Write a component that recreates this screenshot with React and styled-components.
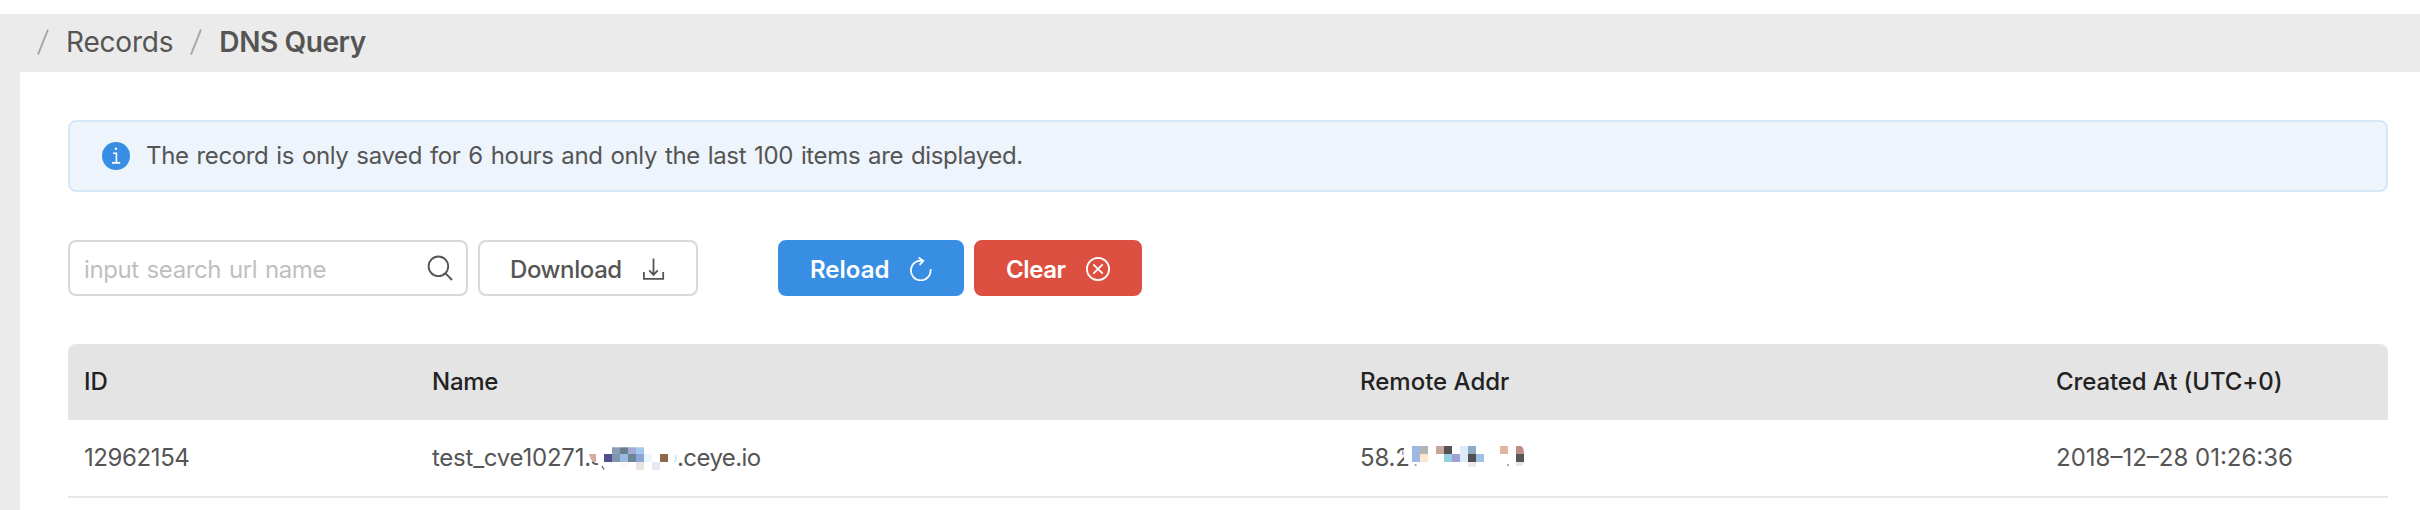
import React from "react";
import styled, { createGlobalStyle } from "styled-components";

const GlobalStyle = createGlobalStyle`
  * { box-sizing: border-box; }
  body {
    margin: 0;
    background: #fff;
    font-family: "Inter", "Liberation Sans", sans-serif;
    font-size: 24px;
    color: #555;
  }
`;

const Page = styled.div`
  height: 510px;
  padding-top: 14px;
  overflow: hidden;
`;

const Shell = styled.div`
  height: 496px;
  background: #ebebeb;
`;

const Breadcrumb = styled.nav`
  display: flex;
  align-items: center;
  height: 58px;
  padding: 0 0 2px 37px;
  font-size: 28px;
  line-height: 36px;
`;

const Slash = styled.svg`
  width: 12px;
  height: 26px;
  margin-top: -1px;
  fill: none;
  stroke: #a6a6a6;
  stroke-width: 2;
`;

const Crumb = styled.span`
  margin: 0 17px 0 17px;
  letter-spacing: ${(p) => (p.$current ? "-0.4px" : "-0.2px")};
  font-weight: ${(p) => (p.$current ? 600 : 400)};
`;

const Content = styled.main`
  height: 438px;
  margin-left: 20px;
  padding: 48px 32px 0 48px;
  background: #fff;
`;

const Alert = styled.div`
  display: flex;
  align-items: center;
  height: 72px;
  padding: 0 32px 2px;
  border: 2px solid #d5e7f7;
  border-radius: 8px;
  background: #edf4fb;
  letter-spacing: -0.36px;
  word-spacing: 1.5px;
`;

const InfoIcon = styled.svg`
  width: 28px;
  height: 28px;
  margin: 2px 16px 0 0;
`;

const Toolbar = styled.div`
  display: flex;
  margin-top: 48px;
`;

const SearchBox = styled.div`
  display: flex;
  align-items: center;
  width: 400px;
  height: 56px;
  margin-right: 10px;
  padding: 0 13px 0 14px;
  border: 2px solid #d9d9d9;
  border-radius: 8px;
`;

const SearchInput = styled.input`
  flex: 1;
  min-width: 0;
  height: 50px;
  padding: 2px 0 0;
  border: 0;
  outline: 0;
  background: none;
  font: inherit;
  letter-spacing: -0.4px;
  word-spacing: 1.5px;
  &::placeholder { color: #bfbfbf; opacity: 1; }
`;

const Icon = styled.svg`
  flex: none;
  width: ${(p) => p.$size}px;
  height: ${(p) => p.$size}px;
  fill: none;
  stroke: currentColor;
  stroke-width: ${(p) => p.$stroke || 1.8};
`;

const variants = {
  plain: { bg: "#fff", fg: "#555", border: "#d9d9d9", weight: 500 },
  primary: { bg: "#388ee2", fg: "#fff", border: "#388ee2", weight: 600 },
  danger: { bg: "#dd4f40", fg: "#fff", border: "#dd4f40", weight: 600 },
};

const Button = styled.button`
  display: flex;
  align-items: center;
  justify-content: space-between;
  width: ${(p) => p.$width}px;
  height: 56px;
  margin: 0 10px 0 ${(p) => p.$offset || 0}px;
  padding: 2px 30px 0;
  border: 2px solid ${(p) => variants[p.$variant].border};
  border-radius: 8px;
  background: ${(p) => variants[p.$variant].bg};
  color: ${(p) => variants[p.$variant].fg};
  font: inherit;
  font-weight: ${(p) => variants[p.$variant].weight};
  letter-spacing: ${(p) => p.$tracking || 0}px;
`;

const Table = styled.div`
  margin-top: 48px;
`;

const TableRow = styled.div`
  display: grid;
  grid-template-columns: 15% 40% 30% 15%;
  align-items: center;
  height: 78px;
  padding-bottom: 2px;
  border-bottom: 2px solid #e8e8e8;
`;

const HeadRow = styled(TableRow)`
  height: 76px;
  border-bottom: 0;
  border-radius: 8px 8px 0 0;
  background: #e4e4e4;
  color: #222;
  font-weight: 500;
`;

const Cell = styled.div`
  display: flex;
  align-items: center;
  padding: 0 16px;
  white-space: nowrap;
  letter-spacing: ${(p) => p.$tracking || 0}px;
`;

const Suffix = styled.span`
  letter-spacing: -0.6px;
`;

const Mosaic = styled.svg`
  flex: none;
  width: ${(p) => p.$width}px;
  height: 22px;
  margin-left: ${(p) => p.$left}px;
  overflow: visible;
`;

const nameTiles = [
  [2, 1, "#544d90"], [3, 0, "#8b9cb4"], [3, 1, "#7f96ae"],
  [4, 0, "#687f8d"], [4, 1, "#98b9e0"], [5, 0, "#a2a9d9"], [5, 1, "#6b8596"],
  [6, 0, "#a0c9ea"], [6, 1, "#8ba5d8"], [6, 2, "#e9e2e2"], [7, 1, "#eaf7fc"],
  [8, 2, "#e7e7f2"], [9, 1, "#8b6b48"], [4, 2, "#fff8f8"],
];

const addrTiles = [
  [0, 0, "#9bb9e2"], [0, 1, "#9bb9e2"], [1, 0, "#b5b5b6"], [1, 1, "#fde8cf"],
  [3, 0, "#c8a59b"], [4, 0, "#535353"], [4, 1, "#94cfdf"], [5, 1, "#a2a0d8"],
  [6, 0, "#dcebfa"], [6, 1, "#dcebfa"], [7, 0, "#8aacc4"], [7, 1, "#505052"],
  [8, 1, "#a1c1e7"], [11, 0, "#dfb89f"], [13, 1, "#565656"],
];

const Tiles = ({ data, inset = 0 }) =>
  data.map(([x, y, fill]) => (
    <rect
      key={`${x}-${y}`}
      x={x * 8}
      y={y ? y * 8 : inset}
      width="8"
      height={y ? 8 : 8 - inset}
      fill={fill}
    />
  ));

const SlashMark = () => (
  <Slash viewBox="0 0 12 26"><path d="M11 0.5 L1 25.5" /></Slash>
);

export default function App() {
  return (
    <Page>
      <GlobalStyle />
      <Shell>
        <Breadcrumb>
          <SlashMark />
          <Crumb>Records</Crumb>
          <SlashMark />
          <Crumb $current>DNS Query</Crumb>
        </Breadcrumb>
        <Content>
          <Alert>
            <InfoIcon viewBox="0 0 28 28">
              <circle cx="14" cy="14" r="14" fill="#388ee2" />
              <path d="M11 11.2h3.4v9.5M10 20.9h8.2" fill="none" stroke="#fff" strokeWidth="1.6" />
              <circle cx="13.9" cy="6.8" r="1.2" fill="#fff" />
            </InfoIcon>
            <span>The record is only saved for 6 hours and only the last 100 items are displayed.</span>
          </Alert>
          <Toolbar>
            <SearchBox>
              <SearchInput placeholder="input search url name" />
              <Icon $size={26} $stroke={1.9} viewBox="0 0 26 26">
                <circle cx="11.4" cy="11.3" r="9.8" />
                <path d="M18.3 18.2 L25 25" />
              </Icon>
            </SearchBox>
            <Button $variant="plain" $width={220} $tracking={-0.4}>
              Download
              <Icon $size={24} viewBox="0 0 24 24">
                <path d="M1.9 15v6.8h19.3V15M11.5 1.6v16.2M7.2 13.4l4.3 4.5 4.3-4.5" />
              </Icon>
            </Button>
            <Button $variant="primary" $width={186} $offset={70}>
              Reload
              <Icon $size={24} viewBox="0 0 24 24">
                <path d="M22.6 12.2 A9.9 9.9 0 1 1 14.5 3.7M10.6 0.6l4.6 3.3-3.6 3.9" />
              </Icon>
            </Button>
            <Button $variant="danger" $width={168} $tracking={-0.4}>
              Clear
              <Icon $size={24} viewBox="0 0 24 24">
                <circle cx="12" cy="12" r="11.1" />
                <path d="M7.3 7.3l9.4 9.4M16.7 7.3l-9.4 9.4" />
              </Icon>
            </Button>
          </Toolbar>
          <Table>
            <HeadRow>
              <Cell>ID</Cell>
              <Cell $tracking={-0.25}>Name</Cell>
              <Cell>Remote Addr</Cell>
              <Cell $tracking={-0.1}>Created At (UTC+0)</Cell>
            </HeadRow>
            <TableRow>
              <Cell $tracking={-0.4}>12962154</Cell>
              <Cell $tracking={-0.25}>
                test_cve10271.
                <Mosaic $left={-2.8} $width={89} viewBox="0 0 89 22">
                  <path d="M4.5 15.5C5 17 7 18.5 10 18" fill="none" stroke="#555" strokeWidth="1.8" />
                  <path d="M1 8H8V16H5Q2 13 1 8Z" fill="#d5aca0" />
                  <path d="M14 20l2 3.5" stroke="#555" strokeWidth="1.2" />
                  <Tiles data={nameTiles} inset={1.3} />
                  <path d="M87 9q2.5 3.5-.5 7" fill="none" stroke="#b9dcf3" strokeWidth="1.2" />
                </Mosaic>
                <Suffix>.ceye.io</Suffix>
              </Cell>
              <Cell $tracking={-0.2}>
                58.2
                <Mosaic $left={2.4} $width={112} viewBox="0 0 112 22">
                  <path d="M-8 0h6v13h-6z" fill="#fff" />
                  <path d="M-10 3q1.800 2 1.800 6h-1.800z" fill="#a9a8cf" />
                  <Tiles data={addrTiles} />
                  <path d="M104 0h5q3 1 3 8h-8z" fill="#bd8f86" />
                  <path d="M104 16h8q-1 4-4 4h-4z" fill="#e8e8e8" />
                  <path d="M56 16h8v5h-8z" fill="#f2e9ec" />
                  <path d="M2.500 19h2M95 19h2" stroke="#555" strokeWidth="1.2" />
                </Mosaic>
              </Cell>
              <Cell>2018–12–28 01:26:36</Cell>
            </TableRow>
          </Table>
        </Content>
      </Shell>
    </Page>
  );
}
